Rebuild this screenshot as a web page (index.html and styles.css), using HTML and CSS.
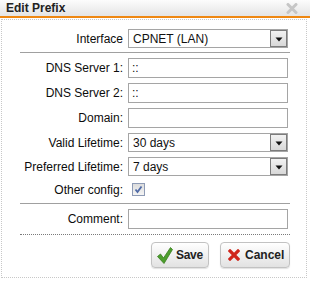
FILE: index.html
```html
<!DOCTYPE html>
<html lang="en">
<head>
    <meta charset="UTF-8">
    <title>Edit Prefix</title>
    <link rel="stylesheet" href="styles.css">
</head>
<body>
    <header class="titlebar">
        <span class="title">Edit Prefix</span>
        <svg class="close" width="12" height="11" viewBox="0 0 12 11">
            <path d="M2 1.5 L10 9.5 M10 1.5 L2 9.5" stroke="#c6c6c6" stroke-width="3" stroke-linecap="round"/>
        </svg>
    </header>

    <form class="dialog">
        <div class="form-grid">
            <label for="iface">Interface</label>
            <div class="select">
                <select id="iface"><option>CPNET (LAN)</option></select>
                <span class="select-btn"><svg width="8" height="5" viewBox="0 0 8 5"><path d="M0.5 0.5 H7.5 L4 4.5 Z" fill="#111"/></svg></span>
            </div>
        </div>

        <hr class="rule">

        <div class="form-grid">
            <label for="dns1">DNS Server 1:</label>
            <input type="text" id="dns1" value="::">

            <label for="dns2">DNS Server 2:</label>
            <input type="text" id="dns2" value="::">

            <label for="domain">Domain:</label>
            <input type="text" id="domain">

            <label for="valid">Valid Lifetime:</label>
            <div class="select">
                <select id="valid"><option>30 days</option></select>
                <span class="select-btn"><svg width="8" height="5" viewBox="0 0 8 5"><path d="M0.5 0.5 H7.5 L4 4.5 Z" fill="#111"/></svg></span>
            </div>

            <label for="preferred">Preferred Lifetime:</label>
            <div class="select">
                <select id="preferred"><option>7 days</option></select>
                <span class="select-btn"><svg width="8" height="5" viewBox="0 0 8 5"><path d="M0.5 0.5 H7.5 L4 4.5 Z" fill="#111"/></svg></span>
            </div>

            <label>Other config:</label>
            <div class="check-cell">
                <span class="checkbox">
                    <svg width="9" height="9" viewBox="0 0 9 9"><path d="M1.5 4.5 L3.5 7 L7.5 1.5" stroke="#4f6aa6" stroke-width="1.8" fill="none"/></svg>
                </span>
            </div>
        </div>

        <hr class="rule">

        <div class="form-grid">
            <label for="comment">Comment:</label>
            <input type="text" id="comment">
        </div>

        <hr class="rule rule-dotted">

        <div class="actions">
            <button type="submit" class="btn btn-save">
                <svg width="16" height="17" viewBox="0 0 16 17">
                    <path d="M0.5 9.5 L3.5 7 L6.5 11 L13.5 0.5 L15.5 2.5 L7 16.5 Z" fill="#4c9e2c" stroke="#3a7d1f" stroke-width="0.8" stroke-linejoin="round"/>
                </svg>
                Save
            </button>
            <button type="button" class="btn btn-cancel">
                <svg width="12" height="12" viewBox="0 0 12 12">
                    <path d="M2 2 L10 10 M10 2 L2 10" stroke="#d0261c" stroke-width="3.2" stroke-linecap="square"/>
                </svg>
                Cancel
            </button>
        </div>
    </form>
</body>
</html>
```

FILE: styles.css
```css
* {
    margin: 0;
    padding: 0;
    box-sizing: border-box;
}

body {
    background: #fff;
    color: #111;
    font-family: "Liberation Sans", Arial, sans-serif;
    font-size: 12px;
}

.titlebar {
    height: 18px;
    display: flex;
    justify-content: space-between;
    align-items: center;
    padding: 0 12px 0 6px;
    background: linear-gradient(#fcfcfc, #e4e4e4);
    border-bottom: 2px solid #ee8711;
}

.title {
    font-weight: bold;
    font-size: 12px;
    color: #222;
}

.close {
    display: block;
}

.dialog {
    margin: 1px 3px 0 1px;
    border: 1px dotted #c8c8c8;
    padding: 9px 16px 9px 18px;
}

.form-grid {
    display: grid;
    grid-template-columns: 103px 160px;
    column-gap: 5px;
    row-gap: 5px;
    align-items: center;
}

.form-grid label {
    text-align: right;
    white-space: nowrap;
    color: #0c0c0c;
}

.form-grid input[type="text"] {
    height: 20px;
    border: 1px solid #a5a5a5;
    padding: 0 3px;
    font: inherit;
    color: #111;
    outline: none;
}

.select {
    position: relative;
    height: 19px;
}

.select select {
    appearance: none;
    width: 100%;
    height: 19px;
    border: 1px solid #a5a5a5;
    border-radius: 0;
    background: #fff;
    padding: 0 20px 0 4px;
    font: inherit;
    color: #111;
    outline: none;
}

.select-btn {
    position: absolute;
    top: 1px;
    right: 1px;
    bottom: 1px;
    width: 17px;
    border: 1px solid #7c7c7c;
    background: linear-gradient(#f2f2f2, #d8d8d8);
    display: flex;
    align-items: center;
    justify-content: center;
    pointer-events: none;
}

.select-btn svg {
    display: block;
    margin-top: 1px;
}

.check-cell {
    height: 17px;
    display: flex;
    align-items: center;
    padding-left: 4px;
}

.checkbox {
    width: 13px;
    height: 13px;
    border: 1px solid #8e9bb5;
    background: linear-gradient(#dcdcdc, #f4f4f4);
    display: flex;
    align-items: center;
    justify-content: center;
}

.checkbox svg {
    display: block;
}

.rule {
    border: 0;
    height: 0;
    border-top: 1px solid #a0a0a0;
    margin: 4px 0 5px;
}

.form-grid + .rule + .form-grid + .rule {
    margin-top: 5px;
}

.rule-dotted {
    border-top: 1px dotted #7a7a7a;
    margin: 7px 0 7px;
}

.actions {
    display: flex;
    justify-content: flex-end;
    gap: 11px;
}

.btn {
    height: 26px;
    display: flex;
    align-items: center;
    border: 1px solid #c2c2c2;
    border-radius: 4px;
    background: linear-gradient(#ffffff, #e2e2e2);
    box-shadow: 0 1px 1px rgba(0, 0, 0, 0.12);
    font-family: "Liberation Sans", Arial, sans-serif;
    font-size: 12px;
    font-weight: bold;
    color: #222;
    cursor: pointer;
}

.btn-save {
    width: 58px;
    padding: 0 4px 0 5px;
    gap: 3px;
    letter-spacing: -0.3px;
}

.btn-cancel {
    width: 70px;
    padding: 0 4px 0 7px;
    gap: 5px;
}

.btn svg {
    display: block;
    flex: none;
}
```
